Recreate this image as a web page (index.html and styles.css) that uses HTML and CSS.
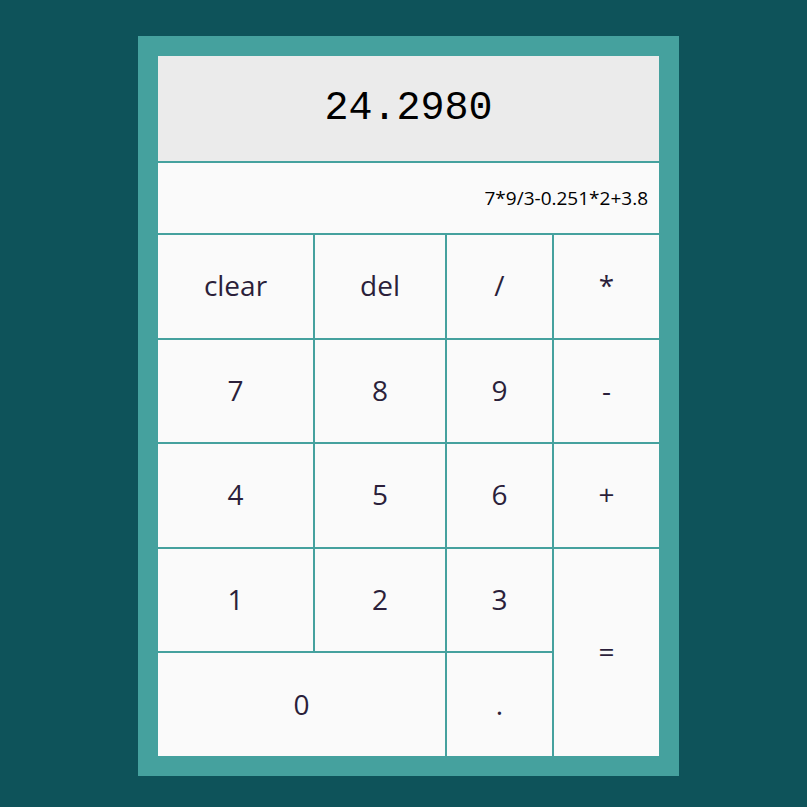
FILE: index.html
```html
<!DOCTYPE html>
<html>
<head>
<meta charset="utf-8">
<link rel="stylesheet" href="styles.css">
</head>
<body>
<div class="calc">
  <div class="display">24.2980</div>
  <div class="expr">7*9/3-0.251*2+3.8</div>
  <div class="keys">
    <div class="key">clear</div>
    <div class="key">del</div>
    <div class="key">/</div>
    <div class="key">*</div>
    <div class="key">7</div>
    <div class="key">8</div>
    <div class="key">9</div>
    <div class="key">-</div>
    <div class="key">4</div>
    <div class="key">5</div>
    <div class="key">6</div>
    <div class="key">+</div>
    <div class="key">1</div>
    <div class="key">2</div>
    <div class="key">3</div>
    <div class="key equals">=</div>
    <div class="key zero">0</div>
    <div class="key">.</div>
  </div>
</div>
</body>
</html>
```
FILE: styles.css
```css
html, body {
  margin: 0;
  padding: 0;
  background: #0e535a;
  height: 100%;
}
body {
  padding-top: 36px;
  box-sizing: border-box;
}
.calc {
  width: 501px;
  margin: 0 0 0 138px;
  border: 20px solid #45a19e;
  background: #45a19e;
  display: flex;
  flex-direction: column;
  gap: 2px;
}
.display {
  height: 105px;
  background: #ebebeb;
  display: flex;
  align-items: center;
  justify-content: center;
  font-family: "Liberation Mono", monospace;
  font-size: 40px;
  color: #000;
}
.expr {
  height: 70px;
  background: #fafafa;
  display: flex;
  align-items: center;
  justify-content: flex-end;
  padding-right: 11px;
  font-family: "Open Sans", sans-serif;
  font-size: 19px;
  color: #000;
}
.keys {
  display: grid;
  grid-template-columns: 155px 130px 105px 105px;
  grid-template-rows: repeat(5, 1fr);
  gap: 2px;
  height: 521px;
}
.key {
  background: #fafafa;
  display: flex;
  align-items: center;
  justify-content: center;
  padding-bottom: 2px;
  font-family: "Open Sans", sans-serif;
  font-size: 28px;
  color: #2b1f3a;
}
.equals {
  grid-column: 4;
  grid-row: 4 / span 2;
}
.zero {
  grid-column: 1 / span 2;
}
```
